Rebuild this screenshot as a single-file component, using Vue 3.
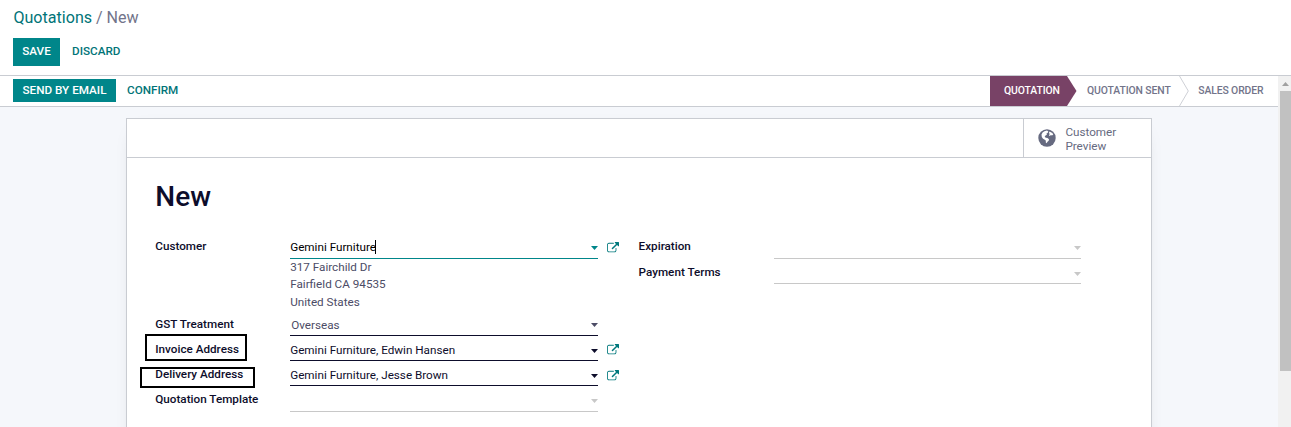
<script setup>
const leftRows = [
  { label: 'GST Treatment', value: 'Overseas', tone: 'select' },
  { label: 'Invoice Address', value: 'Gemini Furniture, Edwin Hansen', link: true, mark: 'invoice' },
  { label: 'Delivery Address', value: 'Gemini Furniture, Jesse Brown', link: true, mark: 'delivery' },
  { label: 'Quotation Template', value: '', tone: 'muted last' },
]
const rightRows = [
  { label: 'Expiration', tone: 'muted' },
  { label: 'Payment Terms', tone: 'muted' },
]
const linkBox = 'M1408 928v320q0 119-84.500 203.500t-203.500 84.500h-832q-119 0-203.500-84.500t-84.500-203.500v-832q0-119 84.500-203.500t203.500-84.500h704q14 0 23 9t9 23v64q0 14-9 23t-23 9h-704q-66 0-113 47t-47 113v832q0 66 47 113t113 47h832q66 0 113-47t47-113v-320q0-14 9-23t23-9h64q14 0 23 9t9 23zm384-864v512q0 26-19 45t-45 19-45-19l-176-176-652 652q-10 10-23 10t-23-10l-114-114q-10-10-10-23t10-23l652-652-176-176q-19-19-19-45t19-45 45-19h512q26 0 45 19t19 45z'
</script>

<template>
  <div class="app">
    <header class="control">
      <div class="crumbs"><a>Quotations</a><span class="sep">/</span><span>New</span></div>
      <div class="actions"><button class="btn primary save">SAVE</button><button class="btn flat discard">DISCARD</button></div>
    </header>
    <div class="content">
      <main class="view">
        <div class="statusbar">
          <button class="btn primary email">SEND BY EMAIL</button>
          <button class="btn flat confirm">CONFIRM</button>
          <div class="stages">
            <div class="stage current"><span>QUOTATION</span></div>
            <svg class="arrow" width="10" height="30" viewBox="0 0 10 30"><path d="M0 0L9.500 15L0 30Z" fill="#784266" /></svg>
            <div class="stage sent"><span>QUOTATION SENT</span></div>
            <svg class="arrow" width="10" height="30" viewBox="0 0 10 30"><path d="M0.500 0L9.300 15L0.500 30" fill="none" stroke="#ced0d6" /></svg>
            <div class="stage order"><span>SALES ORDER</span></div>
          </div>
        </div>
        <section class="sheet">
          <div class="stats">
            <div class="stat">
              <svg width="18" height="18" viewBox="0 0 18 18">
                <circle cx="9" cy="9" r="8.700" fill="#666a80" />
                <path d="M4.600 3.600L6.400 2.200L9 1.600L10.300 2.500L9.600 3.900L8.500 4.600L8.900 5.700L7.500 6.500L6.700 7.800L7.800 8.800L9.500 9L11 10.200L10.700 11.700L9.500 12.700L8.600 14.200L7.700 13.300L7.900 11.700L6.800 10.700L5 9.700L3.800 8L3.500 5.600Z" fill="#fff" />
                <path d="M11.500 2.400L14.300 3.900L15.300 5.600L14 6.600L12.900 6L11.800 7.100L10.900 6.300L11.800 5L10.900 4Z" fill="#fff" />
              </svg>
              <span>Customer<br>Preview</span>
            </div>
          </div>
          <h1>New</h1>
          <div class="groups">
            <div class="group">
              <div class="row first">
                <label>Customer</label>
                <div class="field focus"><span class="value">Gemini Furniture</span><i class="cursor"></i><i class="caret"></i></div>
                <svg class="link" viewBox="0 0 1792 1792"><path :d="linkBox" /></svg>
              </div>
              <div class="address"><div>317 Fairchild Dr</div><div>Fairfield CA 94535</div><div>United States</div></div>
              <div v-for="r in leftRows" :key="r.label" class="row" :class="r.tone">
                <label>{{ r.label }}<i v-if="r.mark" class="mark" :class="r.mark"></i></label>
                <div class="field"><span class="value">{{ r.value }}</span><i class="caret"></i></div>
                <svg v-if="r.link" class="link" :class="r.mark + '-link'" viewBox="0 0 1792 1792"><path :d="linkBox" /></svg>
              </div>
            </div>
            <div class="group right">
              <div v-for="r in rightRows" :key="r.label" class="row" :class="r.tone">
                <label>{{ r.label }}</label>
                <div class="field"><i class="caret"></i></div>
              </div>
            </div>
          </div>
        </section>
      </main>
      <div class="scroll"><i class="up"></i><div class="thumb"></div></div>
    </div>
  </div>
</template>

<style>
html, body { overflow: hidden; }
</style>

<style scoped>
* { box-sizing: border-box; }
.app { width: 1291px; height: 427px; overflow: hidden; display: flex; flex-direction: column; background: #fff; font-family: Roboto, sans-serif; font-size: 11.7px; color: #0d0d2b; }
.control { height: 76px; border-bottom: 1px solid #c9ccd2; padding: 8px 13px 0; flex: none; }
.crumbs { font-size: 16.100px; line-height: 20px; color: #72748a; padding-left: 0.400px; }
.crumbs a { color: #017478; }
.sep { margin: 0 3.800px 0 4px; }
.actions { display: flex; margin-top: 10px; }
.btn { font: 500 11.700px/14px Roboto, sans-serif; border: 0; background: none; color: #017478; padding: 0 0 2px; text-align: center; white-space: nowrap; flex: none; }
.primary { background: #00868a; color: #fff; }
.save { width: 47px; height: 28px; margin-right: 12px; }
.content { display: flex; flex: 1; min-height: 0; }
.view { width: 1278px; background: #f5f7fb; overflow: hidden; }
.statusbar { height: 31px; display: flex; align-items: flex-start; border-bottom: 1px solid #c9ccd2; background: #fff; padding-left: 13px; }
.email { width: 103px; height: 23px; margin-top: 3px; }
.confirm { height: 23px; margin: 3px 0 0 11px; }
.stages { display: flex; margin-left: auto; height: 30px; font-size: 10.400px; letter-spacing: -0.100px; font-weight: 500; color: #72748a; line-height: 29px; white-space: nowrap; }
.stage { flex: none; }
.current { width: 77px; padding-left: 14px; background: #784266; color: #fff; }
.sent { width: 102px; padding-left: 10px; }
.order { width: 89px; padding-left: 9.200px; }
.arrow { display: block; flex: none; }
.sheet { width: 1026px; height: 400px; margin: 11px 0 0 126px; border: 1px solid #c9ccd2; background: #fff; box-shadow: 0 5px 20px -15px rgba(0, 0, 0, .4); }
.stats { height: 39px; border-bottom: 1px solid #c9ccd2; display: flex; justify-content: flex-end; }
.stat { width: 128px; border-left: 1px solid #c9ccd2; display: flex; align-items: center; padding-left: 14.400px; gap: 9px; color: #666a80; line-height: 14px; }
.stat span { padding-top: 1px; }
h1 { margin: 21px 0 0 28.300px; font-size: 28px; line-height: 36px; font-weight: 500; }
.groups { display: flex; margin: 21px 0 0 28px; }
.group { width: 484px; }
.row { display: flex; height: 25px; }
.row label { width: 135px; position: relative; font-weight: 500; line-height: 26px; padding-left: 0.300px; white-space: nowrap; }
.row.first { height: 23px; }
.row.first label { line-height: 20px; }
.field { width: 308px; display: flex; border-bottom: 1px solid #0d0d2b; line-height: 28px; padding-left: 0.200px; }
.first .field { line-height: 22px; }
.value { white-space: nowrap; }
.focus { border-color: #00868a; color: #000; }
.cursor { width: 1px; height: 14px; background: #000; margin: 4px 0 0 -1px; }
.caret { margin: 13px 0 0 auto; width: 7px; height: 4px; background: currentColor; clip-path: polygon(0 0, 100% 0, 50% 100%); }
.select .caret { margin-top: 12px; }
.first .caret { color: #00868a; margin-top: 10px; }
.link { width: 12px; height: 12px; margin: 8px 0 0 9px; fill: #00787c; }
.delivery-link { margin-top: 9px; }
.first .link { margin-top: 6px; }
.address { padding-left: 135.200px; height: 52px; color: #4c4c66; line-height: 17.400px; }
.select .field { color: #4c4c66; padding-left: 1.200px; }
.muted .field { border-color: #c8c8c8; }
.muted .caret { color: #c8c8c8; }
.row.last { height: 26px; }
.right .row label { line-height: 26px; padding-left: 0; margin-left: -0.400px; width: 135.400px; }
.right .row:first-child { height: 23px; }
.right .row:first-child label { line-height: 20px; }
.right .row:first-child .caret { margin-top: 10px; }
.right .field { width: 307px; }
.mark { position: absolute; border: 2px solid #000; }
.invoice { left: -10px; top: -2px; width: 102px; height: 27px; }
.delivery { left: -15px; top: 6px; width: 115px; height: 21px; }
.scroll { width: 13px; background: #f1f1f1; padding-left: 2px; }
.up { display: block; width: 7px; height: 4px; margin: 6px 0 5px 2px; background: #a0a0a0; clip-path: polygon(50% 0, 100% 100%, 0 100%); }
.thumb { height: 280px; background: #c1c1c1; }
</style>
